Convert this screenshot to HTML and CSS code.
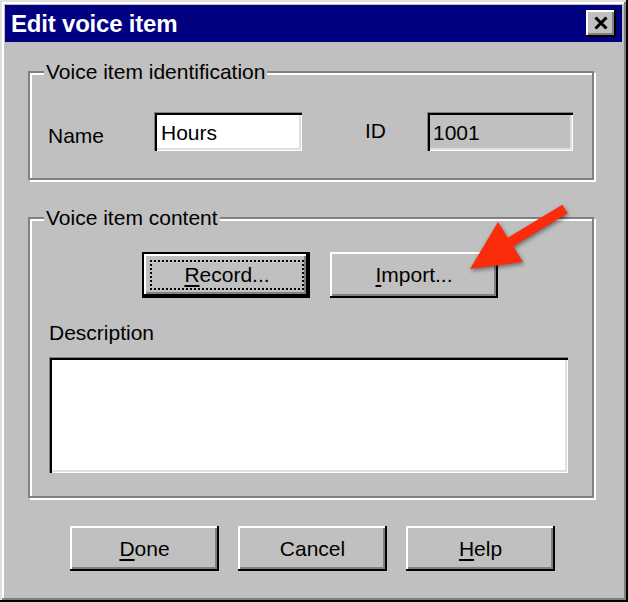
FILE: index.html
```html
<!DOCTYPE html>
<html lang="en">
<head>
  <meta charset="UTF-8" />
  <title>Edit voice item</title>
  <link rel="stylesheet" href="styles.css">
</head>
<body>
  <div class="window">
    <div class="titlebar">
      <span class="title">Edit voice item</span>
      <button class="close-btn" type="button" aria-label="Close">
        <svg width="14" height="14" viewBox="0 0 14 14">
          <path d="M1.5 1.5 L12.5 12.5 M12.5 1.5 L1.5 12.5" stroke="#000" stroke-width="3" fill="none" />
        </svg>
      </button>
    </div>

    <div class="content">
      <fieldset class="group group-id">
        <legend>Voice item identification</legend>
        <div class="id-row">
          <label class="field-label name-label" for="name">Name</label>
          <input class="field name-field" type="text" id="name" value="Hours" />
          <label class="field-label id-label" for="itemId">ID</label>
          <input class="field id-field" type="text" id="itemId" value="1001" disabled />
        </div>
      </fieldset>

      <fieldset class="group group-content">
        <legend>Voice item content</legend>
        <div class="media-row">
          <button class="btn btn-default" type="button"><span class="focus"><u>R</u>ecord...</span></button>
          <button class="btn btn-media" type="button"><u>I</u>mport...</button>
        </div>
        <label class="desc-label" for="description">Description</label>
        <textarea class="field desc-field" id="description"></textarea>
      </fieldset>

      <div class="actions">
        <button class="btn btn-action" type="button"><u>D</u>one</button>
        <button class="btn btn-action" type="button">Cancel</button>
        <button class="btn btn-action" type="button"><u>H</u>elp</button>
      </div>
    </div>

    <!-- red pointer drawn on top of the screenshot -->
    <svg class="arrow" width="628" height="602" viewBox="0 0 628 602">
      <polygon points="562.3,204.8 567.7,213.2 513.2,246.2 523,262 470,269 498,222 507.8,237.8" fill="#fa2c0c" />
    </svg>
  </div>
</body>
</html>
```

FILE: styles.css
```css
* {
  box-sizing: border-box;
}

body {
  margin: 0;
  padding: 0;
  font-family: 'Liberation Sans', Arial, sans-serif;
  font-size: 21px;
  color: #000;
  background: #c0c0c0;
}

.window {
  position: relative;
  width: 628px;
  height: 602px;
  padding: 5px 6px 6px 5px;
  background: #c0c0c0;
  box-shadow: inset -2px -2px #000, inset 2px 2px #dfdfdf,
    inset -4px -4px #808080, inset 4px 4px #fff;
}

.titlebar {
  height: 37px;
  background: #000080;
  display: flex;
  align-items: center;
  justify-content: space-between;
  padding: 0 6px 0 6px;
}

.title {
  color: #fff;
  font-weight: 700;
  font-size: 24px;
  letter-spacing: -0.2px;
}

.close-btn {
  width: 30px;
  height: 27px;
  padding: 0 0 1px 0;
  border: none;
  background: #c0c0c0;
  display: flex;
  align-items: center;
  justify-content: center;
  box-shadow: inset -2px -2px #000, inset 2px 2px #fff, inset -4px -4px #808080;
}

.content {
  padding: 18px 0 0 23px;
}

.group {
  margin: 0;
  padding: 0;
  width: 566px;
  border: 2px solid #808080;
  box-shadow: inset 2px 2px #fff, 2px 2px #fff;
}

.group legend {
  margin-left: 14px;
  padding: 0 2px;
  line-height: 24px;
  background: #c0c0c0;
}

.id-row {
  display: flex;
  align-items: flex-start;
  padding: 28px 0 27px 18px;
}

.field-label {
  line-height: 24px;
  margin-top: 12px;
}

.name-label {
  width: 106px;
}

.id-label {
  width: 62px;
  margin-left: 63px;
  margin-top: 7px;
}

.field {
  font: inherit;
  color: #000;
  border: none;
  outline: none;
  background: #fff;
  box-shadow: inset 1px 1px #808080, inset 3px 3px #000,
    inset -1px -1px #fff, inset -3px -3px #dfdfdf;
}

.name-field {
  width: 148px;
  height: 39px;
  padding: 2px 4px 0 7px;
}

.id-field {
  width: 146px;
  height: 39px;
  padding: 2px 4px 0 6px;
  background: #c0c0c0;
  -webkit-text-fill-color: #000;
}

.group-content {
  margin-top: 26px;
}

.media-row {
  display: flex;
  gap: 20px;
  padding: 22px 0 0 112px;
}

.btn {
  font: inherit;
  color: #000;
  border: none;
  background: #c0c0c0;
  padding: 0;
  display: flex;
  align-items: center;
  justify-content: center;
  box-shadow: inset -2px -2px #000, inset 2px 2px #fff, inset -4px -4px #808080;
  cursor: pointer;
}

.btn u {
  text-decoration-thickness: 2px;
  text-underline-offset: 3px;
}

.btn-default,
.btn-media {
  width: 168px;
  height: 46px;
}

.btn-default {
  padding: 8px 6px 8px 8px;
  box-shadow: inset 0 0 0 2px #000, inset -4px -4px #000, inset 4px 4px #fff,
    inset -6px -6px #808080;
}

.btn-default .focus {
  width: 100%;
  height: 100%;
  border: 2px dotted #000;
  display: flex;
  align-items: center;
  justify-content: center;
}

.desc-label {
  display: block;
  line-height: 24px;
  margin: 23px 0 0 19px;
}

.desc-field {
  display: block;
  width: 519px;
  height: 116px;
  margin: 12px 0 23px 19px;
  resize: none;
}

.actions {
  display: flex;
  gap: 19px;
  margin: 28px 0 0 42px;
}

.btn-action {
  width: 149px;
  height: 45px;
}

.arrow {
  position: absolute;
  left: 0;
  top: 0;
  pointer-events: none;
  filter: drop-shadow(1px 2px 2px rgba(0, 0, 0, 0.45));
}
```
